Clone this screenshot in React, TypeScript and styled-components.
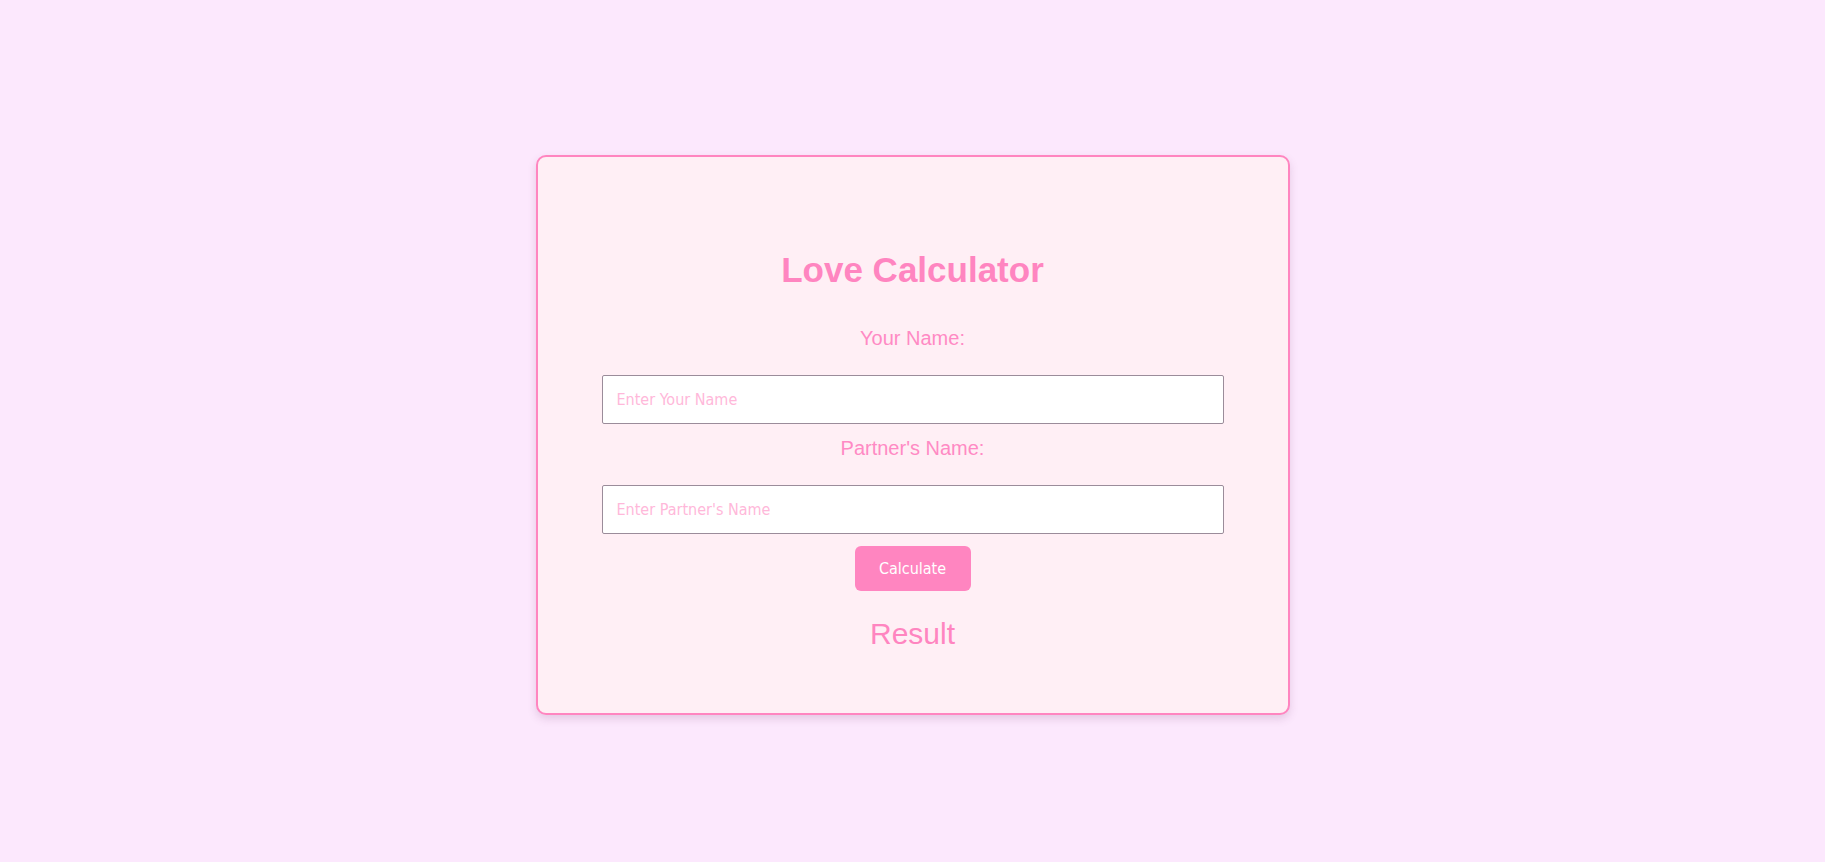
import React, { useState } from "react";
import styled, { createGlobalStyle } from "styled-components";

const GlobalStyle = createGlobalStyle`
  html, body {
    margin: 0;
    padding: 0;
    background: #fce8fd;
  }
  * { box-sizing: border-box; }
`;

const Page = styled.main`
  min-height: 862px;
  display: flex;
  justify-content: center;
  align-items: flex-start;
  padding-top: 155px;
  font-family: "Liberation Sans", Arial, sans-serif;
`;

const Card = styled.section`
  width: 754px;
  background: #ffeff5;
  border: 2px solid #ff85c0;
  border-radius: 10px;
  box-shadow: 0 4px 8px rgba(120, 60, 110, 0.18);
  padding: 92px 64px 62px;
  display: flex;
  flex-direction: column;
  align-items: center;
`;

const Title = styled.h1`
  margin: 0 0 34px;
  font-size: 35px;
  line-height: 42px;
  font-weight: 700;
  color: #ff85c0;
`;

const Label = styled.label<{ $first?: boolean }>`
  display: block;
  margin: ${(p) => (p.$first ? "0" : "11px")} 0 24px;
  font-size: 20px;
  line-height: 26px;
  color: #ff8ac4;
`;

const Input = styled.input`
  width: 100%;
  height: 49px;
  border: 1px solid #9b8c9a;
  border-radius: 2px;
  background: #ffffff;
  padding: 0 14px;
  font-family: "DejaVu Sans Condensed", "DejaVu Sans", sans-serif;
  font-size: 16px;
  color: #444;
  outline: none;
  &::placeholder {
    color: #ffb8da;
  }
`;

const Button = styled.button`
  margin-top: 12px;
  width: 116px;
  height: 45px;
  border: none;
  border-radius: 6px;
  background: #ff85c0;
  color: #ffffff;
  font-family: "DejaVu Sans Condensed", "DejaVu Sans", sans-serif;
  font-size: 16px;
  cursor: pointer;
`;

const Result = styled.p`
  margin: 25px 0 0;
  font-size: 30px;
  line-height: 35px;
  color: #ff85c0;
`;

export default function App() {
  const [you, setYou] = useState("");
  const [partner, setPartner] = useState("");
  const [result, setResult] = useState("Result");

  const calculate = () => {
    if (!you.trim() || !partner.trim()) {
      setResult("Result");
      return;
    }
    const s = (you + partner).toLowerCase();
    let h = 0;
    for (let i = 0; i < s.length; i++) h = (h * 31 + s.charCodeAt(i)) % 101;
    setResult(`${h}%`);
  };

  return (
    <>
      <GlobalStyle />
      <Page>
        <Card>
          <Title>Love Calculator</Title>
          <Label $first htmlFor="you">Your Name:</Label>
          <Input
            id="you"
            placeholder="Enter Your Name"
            value={you}
            onChange={(e) => setYou(e.target.value)}
          />
          <Label htmlFor="partner">Partner's Name:</Label>
          <Input
            id="partner"
            placeholder="Enter Partner's Name"
            value={partner}
            onChange={(e) => setPartner(e.target.value)}
          />
          <Button onClick={calculate}>Calculate</Button>
          <Result>{result}</Result>
        </Card>
      </Page>
    </>
  );
}
